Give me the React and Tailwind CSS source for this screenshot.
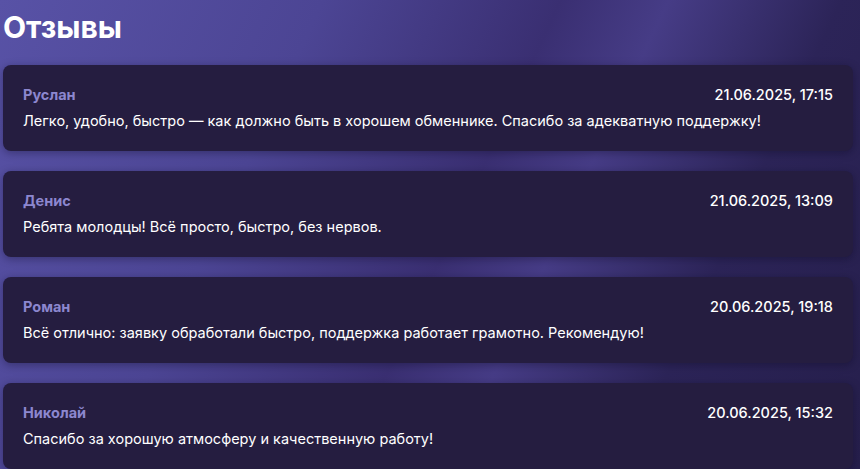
import React from "react";

const reviews = [
  {
    name: "Руслан",
    date: "21.06.2025, 17:15",
    text: "Легко, удобно, быстро — как должно быть в хорошем обменнике. Спасибо за адекватную поддержку!",
  },
  {
    name: "Денис",
    date: "21.06.2025, 13:09",
    text: "Ребята молодцы! Всё просто, быстро, без нервов.",
  },
  {
    name: "Роман",
    date: "20.06.2025, 19:18",
    text: "Всё отлично: заявку обработали быстро, поддержка работает грамотно. Рекомендую!",
  },
  {
    name: "Николай",
    date: "20.06.2025, 15:32",
    text: "Спасибо за хорошую атмосферу и качественную работу!",
  },
];

const ReviewCard = ({ review }) => (
  <div className="rounded-lg bg-[#251d40] px-5 pt-5 pb-5 shadow-[0_2px_8px_rgba(10,5,30,0.35)]">
    <div className="flex items-center justify-between leading-5">
      <span className="text-[14.5px] font-bold text-[#8c87cf]">{review.name}</span>
      <span className="text-[14.5px] font-medium text-white">{review.date}</span>
    </div>
    <p className="mt-1.5 text-[14.5px] leading-5 text-white">{review.text}</p>
  </div>
);

const App = () => {
  return (
    <div
      className="min-h-[469px] w-full overflow-hidden bg-[linear-gradient(115deg,#5852a6_0%,#4c4594_30%,#3a2f72_52%,#463c86_62%,#2c2458_78%,#261f4c_100%)] px-[3px] pt-[7px] font-['Inter','Noto_Sans',sans-serif]"
    >
      <h1 className="text-[30px] font-bold leading-[40px] text-white">Отзывы</h1>
      <div className="mt-[18px] mr-[4px] flex flex-col gap-5">
        {reviews.map((r) => (
          <ReviewCard key={r.name} review={r} />
        ))}
      </div>
    </div>
  );
};

export default App;
